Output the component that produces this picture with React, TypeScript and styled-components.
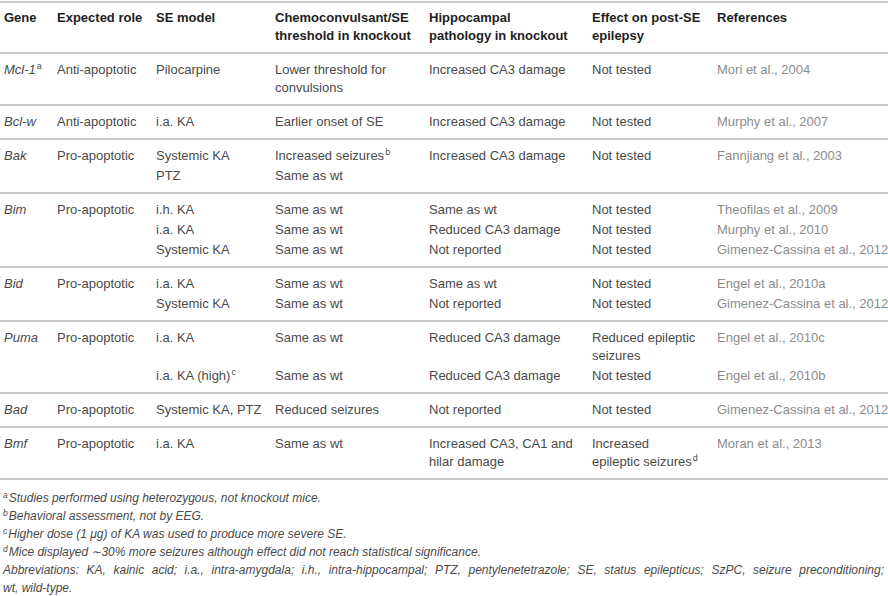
import React from "react";
import styled, { createGlobalStyle } from "styled-components";

const Global = createGlobalStyle`
  html, body { margin: 0; padding: 0; background: #ffffff; }
  body { font-family: "Liberation Sans", Arial, sans-serif; }
`;

const COLS = "53px 99px 119px 154px 163px 125px 1fr";

const Page = styled.div`
  width: 888px;
  height: 596px;
  padding-top: 1px;
  box-sizing: border-box;
  overflow: hidden;
`;

const Table = styled.div`
  border-top: 2px solid #c9c9c9;
`;

const Row = styled.div<{ $head?: boolean }>`
  display: grid;
  grid-template-columns: ${COLS};
  row-gap: 2px;
  padding: ${(p) => (p.$head ? "6px 0 7px 4px" : "7px 0 7px 4px")};
  border-bottom: 2px solid #c9c9c9;
`;

const HeadCell = styled.div`
  font-size: 13px;
  line-height: 18px;
  font-weight: 700;
  color: #1e1e1e;
  white-space: nowrap;
`;

const Cell = styled.div<{ $tone?: "gene" | "ref" }>`
  font-size: 13px;
  line-height: 18px;
  white-space: nowrap;
  color: ${(p) => (p.$tone === "ref" ? "#8c8c8c" : "#4a4a4a")};
  font-style: ${(p) => (p.$tone === "gene" ? "italic" : "normal")};
`;

const Sup = styled.sup`
  font-size: 9px;
  font-style: normal;
  line-height: 0;
  vertical-align: 5px;
  margin-left: 1px;
`;

const Notes = styled.div`
  margin-top: 9px;
  padding: 0 4px 0 3px;
  font-size: 12px;
  line-height: 18px;
  font-style: italic;
  color: #4a4a4a;
`;

const Note = styled.div``;

const NoteMark = styled.sup`
  font-size: 8.5px;
  line-height: 0;
  vertical-align: 4px;
  margin-right: 1px;
`;

const Justified = styled.div`
  text-align: justify;
  text-align-last: justify;
`;

type Sub = [React.ReactNode, React.ReactNode, React.ReactNode, React.ReactNode, string];

interface Group {
  gene: string;
  sup?: string;
  role: string;
  rows: Sub[];
}

const groups: Group[] = [
  {
    gene: "Mcl-1",
    sup: "a",
    role: "Anti-apoptotic",
    rows: [
      [
        "Pilocarpine",
        <>Lower threshold for<br />convulsions</>,
        "Increased CA3 damage",
        "Not tested",
        "Mori et al., 2004",
      ],
    ],
  },
  {
    gene: "Bcl-w",
    role: "Anti-apoptotic",
    rows: [["i.a. KA", "Earlier onset of SE", "Increased CA3 damage", "Not tested", "Murphy et al., 2007"]],
  },
  {
    gene: "Bak",
    role: "Pro-apoptotic",
    rows: [
      [
        "Systemic KA",
        <>Increased seizures<Sup>b</Sup></>,
        "Increased CA3 damage",
        "Not tested",
        "Fannjiang et al., 2003",
      ],
      ["PTZ", "Same as wt", "", "", ""],
    ],
  },
  {
    gene: "Bim",
    role: "Pro-apoptotic",
    rows: [
      ["i.h. KA", "Same as wt", "Same as wt", "Not tested", "Theofilas et al., 2009"],
      ["i.a. KA", "Same as wt", "Reduced CA3 damage", "Not tested", "Murphy et al., 2010"],
      ["Systemic KA", "Same as wt", "Not reported", "Not tested", "Gimenez-Cassina et al., 2012"],
    ],
  },
  {
    gene: "Bid",
    role: "Pro-apoptotic",
    rows: [
      ["i.a. KA", "Same as wt", "Same as wt", "Not tested", "Engel et al., 2010a"],
      ["Systemic KA", "Same as wt", "Not reported", "Not tested", "Gimenez-Cassina et al., 2012"],
    ],
  },
  {
    gene: "Puma",
    role: "Pro-apoptotic",
    rows: [
      [
        "i.a. KA",
        "Same as wt",
        "Reduced CA3 damage",
        <>Reduced epileptic<br />seizures</>,
        "Engel et al., 2010c",
      ],
      [
        <>i.a. KA (high)<Sup>c</Sup></>,
        "Same as wt",
        "Reduced CA3 damage",
        "Not tested",
        "Engel et al., 2010b",
      ],
    ],
  },
  {
    gene: "Bad",
    role: "Pro-apoptotic",
    rows: [["Systemic KA, PTZ", "Reduced seizures", "Not reported", "Not tested", "Gimenez-Cassina et al., 2012"]],
  },
  {
    gene: "Bmf",
    role: "Pro-apoptotic",
    rows: [
      [
        "i.a. KA",
        "Same as wt",
        <>Increased CA3, CA1 and<br />hilar damage</>,
        <>Increased<br />epileptic seizures<Sup>d</Sup></>,
        "Moran et al., 2013",
      ],
    ],
  },
];

const headers: React.ReactNode[] = [
  "Gene",
  "Expected role",
  "SE model",
  <>Chemoconvulsant/SE<br />threshold in knockout</>,
  <>Hippocampal<br />pathology in knockout</>,
  <>Effect on post-SE<br />epilepsy</>,
  "References",
];

export default function App() {
  return (
    <Page>
      <Global />
      <Table>
        <Row $head>
          {headers.map((h, i) => (
            <HeadCell key={i}>{h}</HeadCell>
          ))}
        </Row>
        {groups.map((g) => (
          <Row key={g.gene}>
            {g.rows.map((r, i) => (
              <React.Fragment key={i}>
                <Cell $tone="gene">
                  {i === 0 ? g.gene : ""}
                  {i === 0 && g.sup ? <Sup>{g.sup}</Sup> : null}
                </Cell>
                <Cell>{i === 0 ? g.role : ""}</Cell>
                <Cell>{r[0]}</Cell>
                <Cell>{r[1]}</Cell>
                <Cell>{r[2]}</Cell>
                <Cell>{r[3]}</Cell>
                <Cell $tone="ref">{r[4]}</Cell>
              </React.Fragment>
            ))}
          </Row>
        ))}
      </Table>
      <Notes>
        <Note><NoteMark>a</NoteMark>Studies performed using heterozygous, not knockout mice.</Note>
        <Note><NoteMark>b</NoteMark>Behavioral assessment, not by EEG.</Note>
        <Note><NoteMark>c</NoteMark>Higher dose (1 μg) of KA was used to produce more severe SE.</Note>
        <Note><NoteMark>d</NoteMark>Mice displayed ∼30% more seizures although effect did not reach statistical significance.</Note>
        <Justified>
          Abbreviations: KA, kainic acid; i.a., intra-amygdala; i.h., intra-hippocampal; PTZ, pentylenetetrazole; SE, status epilepticus; SzPC, seizure preconditioning;
        </Justified>
        <Note>wt, wild-type.</Note>
      </Notes>
    </Page>
  );
}
